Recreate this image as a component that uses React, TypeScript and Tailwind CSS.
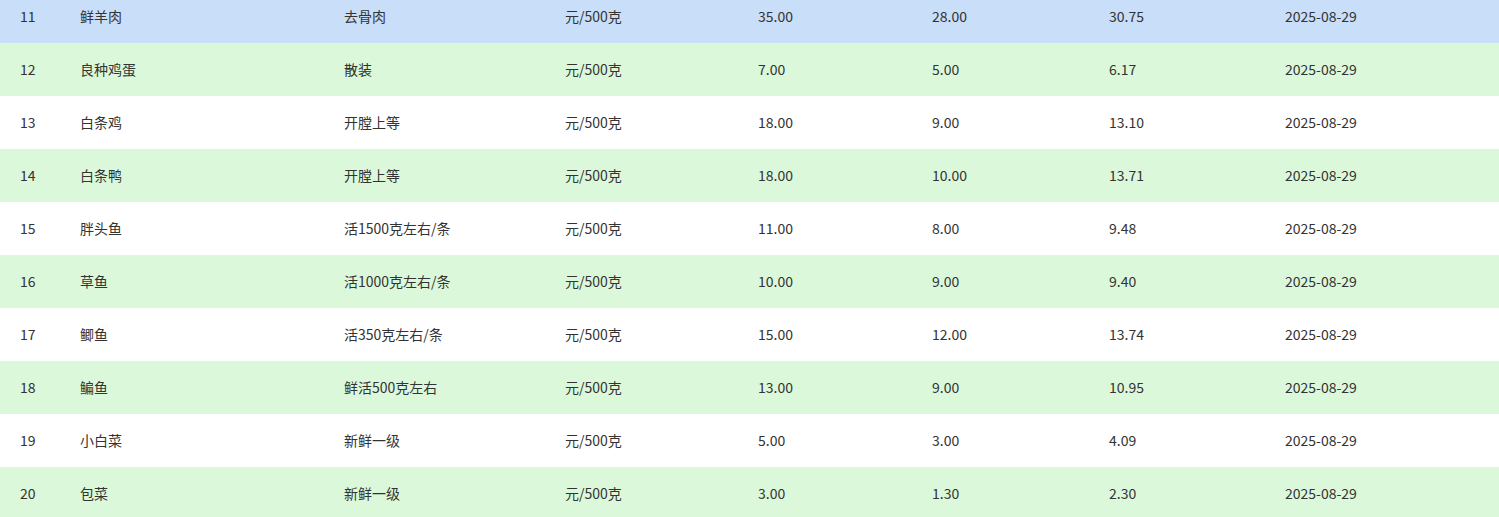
import React from "react";

const rows = [
  ["11", "鲜羊肉", "去骨肉", "元/500克", "35.00", "28.00", "30.75", "2025-08-29"],
  ["12", "良种鸡蛋", "散装", "元/500克", "7.00", "5.00", "6.17", "2025-08-29"],
  ["13", "白条鸡", "开膛上等", "元/500克", "18.00", "9.00", "13.10", "2025-08-29"],
  ["14", "白条鸭", "开膛上等", "元/500克", "18.00", "10.00", "13.71", "2025-08-29"],
  ["15", "胖头鱼", "活1500克左右/条", "元/500克", "11.00", "8.00", "9.48", "2025-08-29"],
  ["16", "草鱼", "活1000克左右/条", "元/500克", "10.00", "9.00", "9.40", "2025-08-29"],
  ["17", "鲫鱼", "活350克左右/条", "元/500克", "15.00", "12.00", "13.74", "2025-08-29"],
  ["18", "鳊鱼", "鲜活500克左右", "元/500克", "13.00", "9.00", "10.95", "2025-08-29"],
  ["19", "小白菜", "新鲜一级", "元/500克", "5.00", "3.00", "4.09", "2025-08-29"],
  ["20", "包菜", "新鲜一级", "元/500克", "3.00", "1.30", "2.30", "2025-08-29"],
];

export default function App() {
  return (
    <div
      className="w-[1499px] h-[517px] overflow-hidden bg-white text-[14px] text-[#333333]"
      style={{ fontFamily: '"Microsoft YaHei", "Noto Sans CJK SC", sans-serif' }}
    >
      <div className="-mt-[10px]">
        {rows.map((r, i) => {
          const bg = i === 0 ? "bg-[#c8def9]" : i % 2 === 1 ? "bg-[#dbf9da]" : "bg-white";
          return (
            <div
              key={r[0]}
              className={`grid grid-cols-[60px_264px_221px_193px_174px_177px_176px_1fr] h-[53px] items-center ${bg}`}
            >
              {r.map((c, j) => (
                <div key={j} className="pl-[20px] whitespace-nowrap">
                  {c}
                </div>
              ))}
            </div>
          );
        })}
      </div>
    </div>
  );
}
